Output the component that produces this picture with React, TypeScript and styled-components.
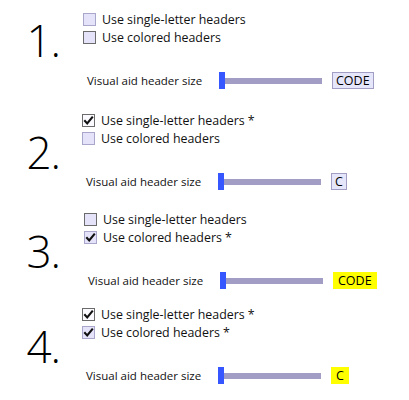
import styled, { createGlobalStyle } from 'styled-components';

const GlobalStyle = createGlobalStyle`
  html, body {
    margin: 0;
    padding: 0;
    background: #fff;
  }
  body {
    font-family: "Open Sans", "Noto Sans", sans-serif;
    color: #000;
  }
`;

const Page = styled.div`
  width: 409px;
  height: 400px;
  overflow: hidden;
`;

const Section = styled.section<{ $top: number }>`
  display: flex;
  padding-top: ${(p) => p.$top}px;
`;

const Number = styled.div<{ $drop: number }>`
  width: 60px;
  padding-top: ${(p) => p.$drop}px;
  text-align: right;
  font-family: "Open Sans", sans-serif;
  font-weight: 300;
  font-size: 44px;
  line-height: 1;
  letter-spacing: -1px;
`;

const Content = styled.div<{ $shift: number }>`
  display: flex;
  flex-direction: column;
  margin-left: ${(p) => 22 + p.$shift}px;
`;

const CheckRow = styled.label`
  display: flex;
  align-items: center;
  gap: 6px;
  height: 18px;
  font-size: 12.4px;
  color: #111;
`;

const Box = styled.span<{ $dark: boolean; $fill: 'white' | 'lavender' }>`
  box-sizing: border-box;
  width: 13px;
  height: 13px;
  border: 1px solid ${(p) => (p.$dark ? '#6b6b6b' : '#a9a6cc')};
  background: ${(p) => (p.$fill === 'white' ? '#fafaff' : '#e4e3fa')};
  display: flex;
  align-items: center;
  justify-content: center;
`;

const SliderRow = styled.div`
  display: flex;
  align-items: center;
  height: 17px;
  margin-top: 26px;
  padding-left: 4px;
`;

const SliderLabel = styled.span`
  width: 132px;
  font-size: 11.5px;
  color: #111;
`;

const Slider = styled.div`
  display: flex;
  align-items: center;
  height: 17px;
`;

const Thumb = styled.span`
  width: 6px;
  height: 17px;
  background: #3656ff;
`;

const Track = styled.span`
  width: 97px;
  height: 6px;
  background: #a19dc5;
`;

const Preview = styled.span<{ $colored: boolean }>`
  box-sizing: border-box;
  margin-left: 10px;
  height: 17px;
  padding: 0 ${(p) => (p.$colored ? 4 : 3)}px;
  display: flex;
  align-items: center;
  font-size: 12.5px;
  color: #000;
  background: ${(p) => (p.$colored ? '#ffff00' : '#e6e6fa')};
  border: 1px solid ${(p) => (p.$colored ? '#ffff00' : '#a19dc5')};
`;

type Check = { text: string; checked: boolean; dark: boolean; fill: 'white' | 'lavender' };

type Variant = {
  num: string;
  top: number;
  drop: number;
  shift: number;
  rows: Check[];
  preview: string;
  colored: boolean;
};

const CheckMark = () => (
  <svg width="11" height="11" viewBox="0 0 11 11">
    <path d="M1.3 5.3 L4.2 8.4 L9.8 1.6" fill="none" stroke="#111" strokeWidth="2.1" />
  </svg>
);

const variants: Variant[] = [
  {
    num: '1.',
    top: 10,
    drop: 8,
    shift: 1,
    rows: [
      { text: 'Use single-letter headers', checked: false, dark: false, fill: 'lavender' },
      { text: 'Use colored headers', checked: false, dark: true, fill: 'lavender' },
    ],
    preview: 'CODE',
    colored: false,
  },
  {
    num: '2.',
    top: 22,
    drop: 19,
    shift: 0,
    rows: [
      { text: 'Use single-letter headers *', checked: true, dark: true, fill: 'white' },
      { text: 'Use colored headers', checked: false, dark: false, fill: 'lavender' },
    ],
    preview: 'C',
    colored: false,
  },
  {
    num: '3.',
    top: 20,
    drop: 19,
    shift: 2,
    rows: [
      { text: 'Use single-letter headers', checked: false, dark: true, fill: 'lavender' },
      { text: 'Use colored headers *', checked: true, dark: false, fill: 'lavender' },
    ],
    preview: 'CODE',
    colored: true,
  },
  {
    num: '4.',
    top: 16,
    drop: 19,
    shift: 0,
    rows: [
      { text: 'Use single-letter headers *', checked: true, dark: true, fill: 'white' },
      { text: 'Use colored headers *', checked: true, dark: false, fill: 'lavender' },
    ],
    preview: 'C',
    colored: true,
  },
];

export default function App() {
  return (
    <Page>
      <GlobalStyle />
      {variants.map((v) => (
        <Section key={v.num} $top={v.top}>
          <Number $drop={v.drop}>{v.num}</Number>
          <Content $shift={v.shift}>
            {v.rows.map((r) => (
              <CheckRow key={r.text}>
                <Box $dark={r.dark} $fill={r.fill}>
                  {r.checked && <CheckMark />}
                </Box>
                {r.text}
              </CheckRow>
            ))}
            <SliderRow>
              <SliderLabel>Visual aid header size</SliderLabel>
              <Slider>
                <Thumb />
                <Track />
              </Slider>
              <Preview $colored={v.colored}>{v.preview}</Preview>
            </SliderRow>
          </Content>
        </Section>
      ))}
    </Page>
  );
}
